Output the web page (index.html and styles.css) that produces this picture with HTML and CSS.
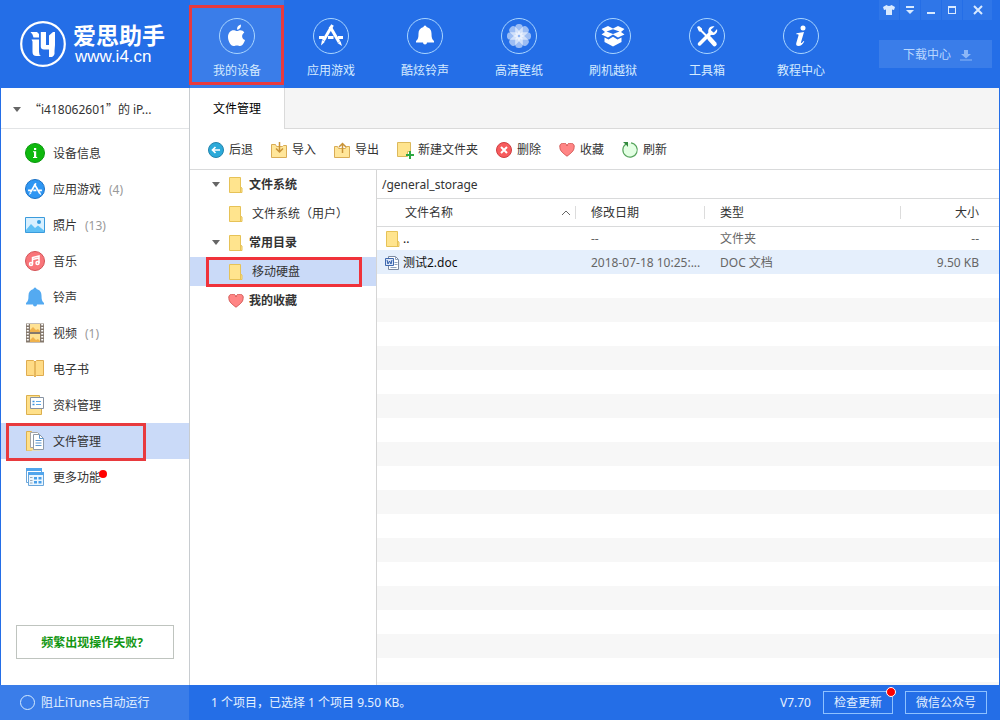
FILE: index.html
```html
<!DOCTYPE html>
<html lang="zh-CN">
<head>
<meta charset="utf-8">
<meta name="viewport" content="width=device-width, initial-scale=1">
<title>爱思助手</title>
<link rel="stylesheet" href="styles.css">
</head>
<body>
<svg class="sprite" aria-hidden="true">
  <symbol id="folder" viewBox="0 0 16 16">
    <path d="M1.500.5h11v9.500l1.500 1v4.500H1.500z" fill="#ffe48e" stroke="#e6c257"/>
    <path d="M12.500 10v5" stroke="#e6c257" fill="none"/>
  </symbol>
  <symbol id="heart" viewBox="0 0 18 16">
    <path d="M9 15C5 12 1 9 1 5.200A4 4 0 0 1 9 3.500A4 4 0 0 1 17 5.200C17 9 13 12 9 15z" fill="#ff8585" stroke="#cf5350"/>
  </symbol>
  <symbol id="appstore" viewBox="0 0 26 22">
    <g fill="none" stroke="currentColor" stroke-width="3">
      <path d="M1 13.500h5M10 13.500h5.500M20 13.500h5"/>
      <path d="M14.500 1L5.500 16.500"/>
      <path d="M12 2.500L21 18"/>
    </g>
    <path d="M4 16l3 1.800L3 21.500zM19.500 19l3-1.800 1.500 4.800z" fill="currentColor"/>
  </symbol>
  <symbol id="bell" viewBox="0 0 20 20">
    <path d="M8.500 2a1.500 1.500 0 0 1 3 0C15 2.800 16.500 5.500 16.500 8.500c0 4 .5 6 2.500 7.500v1.500h-7a2 2 0 0 1-4 0H1V16c2-1.500 2.500-3.500 2.500-7.500C3.500 5.500 5 2.800 8.500 2z" fill="currentColor"/>
  </symbol>
</svg>

<div class="window">
  <header class="header">
    <a class="logo" href="#">
      <svg class="logo-mark" viewBox="0 0 46 46" aria-hidden="true">
        <circle cx="23" cy="23" r="21.800" fill="none" stroke="#fff" stroke-width="2.200"/>
        <path d="M10.500 11h6.500l2 2v3.500h-5.500l-1-3zM11.500 18.500H19V31q0 3 2 4h-4.500q-4 0-4-4V20.500z" fill="#fff"/>
        <path d="M20.800 11H26v13h3V14.500l4-3.500h2v13l-.5 6V33q-.5 2-2.500 3h-3v-7.500h-5q-3.200 0-3.200-3z" fill="#fff"/>
      </svg>
      <span class="logo-text">
        <span class="logo-name">爱思助手</span>
        <span class="logo-url">www.i4.cn</span>
      </span>
    </a>
    <nav class="main-nav">
      <a class="nav-item nav-item-active" href="#">
        <svg class="nav-icon" viewBox="0 0 36 36" aria-hidden="true"><circle class="ring" cx="18" cy="18" r="17.500"/><path fill="#fff" d="M18 11.800q-.2-4.300 4-5.300 .2 4.500-4 5.300zM9 19c0-5.300 4.200-7.900 7.200-6.500 1.600.7 2.100.7 3.700 0 2-.8 4.200 0 5.400 1.900-3.300 2.100-2.600 6.500.7 7.700-1 3.100-2.800 6-4.800 6-1.300 0-1.700-.7-3.300-.7s-2 .7-3.300.7c-3 0-5.600-5.200-5.600-9.100z"/></svg>
        <span>我的设备</span>
      </a>
      <a class="nav-item" href="#">
        <svg class="nav-icon" viewBox="0 0 36 36" aria-hidden="true"><circle class="ring" cx="18" cy="18" r="17.500"/><use href="#appstore" x="5" y="6" width="26" height="22"/></svg>
        <span>应用游戏</span>
      </a>
      <a class="nav-item" href="#">
        <svg class="nav-icon" viewBox="0 0 36 36" aria-hidden="true"><circle class="ring" cx="18" cy="18" r="17.500"/><use href="#bell" x="8" y="7" width="20" height="20"/></svg>
        <span>酷炫铃声</span>
      </a>
      <a class="nav-item" href="#">
        <svg class="nav-icon" viewBox="0 0 36 36" aria-hidden="true"><circle class="ring" cx="18" cy="18" r="17.500"/>
          <g fill="#fff" fill-opacity=".55"><rect id="petal" x="14.200" y="6" width="7.600" height="11.500" rx="3.500"/><use href="#petal" transform="rotate(45 18 18)"/><use href="#petal" transform="rotate(90 18 18)"/><use href="#petal" transform="rotate(135 18 18)"/><use href="#petal" transform="rotate(180 18 18)"/><use href="#petal" transform="rotate(225 18 18)"/><use href="#petal" transform="rotate(270 18 18)"/><use href="#petal" transform="rotate(315 18 18)"/></g><circle cx="18" cy="18" r="1.200" fill="#8fb5f5"/></svg>
        <span>高清壁纸</span>
      </a>
      <a class="nav-item" href="#">
        <svg class="nav-icon" viewBox="0 0 36 36" aria-hidden="true"><circle class="ring" cx="18" cy="18" r="17.500"/><path fill="#fff" fill-rule="evenodd" d="M6.500 11L13 8l5 2.500L23 8l6.500 3-3.500 3 3.500 2.500L23 19.500l-5-3-5 3-6.500-3L10 14zM11.500 13.500l6.500 2.500 6.500-2.500L18 11.200zM9.500 19.500l4 2 4.500-2.800 4.500 2.800 4-2v4.500L18 28.500 9.500 24z"/></svg>
        <span>刷机越狱</span>
      </a>
      <a class="nav-item" href="#">
        <svg class="nav-icon" viewBox="0 0 36 36" aria-hidden="true"><circle class="ring" cx="18" cy="18" r="17.500"/><g stroke="#fff" fill="none"><path d="M9.500 10l10.500 10.500" stroke-width="2"/><path d="M20.500 20.500l5 5.500" stroke-width="4.500" stroke-linecap="round"/><path d="M10.500 26L22 14.500" stroke-width="3.500" stroke-linecap="round"/></g><path fill="#fff" d="M8 9l2-1 3 2.500v2l-1 1h-2zM25.500 8.500l-3.500 3 .5 2.500 2.500.5 3-3.500c1 3-1.500 6.500-5 6-3-.3-4.500-3-3.500-5.500.8-2.500 3.300-3.700 6-3z"/></svg>
        <span>工具箱</span>
      </a>
      <a class="nav-item" href="#">
        <svg class="nav-icon" viewBox="0 0 36 36" aria-hidden="true"><circle class="ring" cx="18" cy="18" r="17.500"/><circle cx="20" cy="10" r="2.500" fill="#fff"/><path fill="#fff" d="M13.500 15.200l7.500-1.200-3 10.200c-.4 1.400.8 1.200 2.500-1.200l.8.600c-1.800 3.300-3.600 4.400-5.800 4.400-2 0-2.700-1.200-2.200-3l2.200-7.600c.3-1-.3-1.200-2.200-1.200z"/></svg>
        <span>教程中心</span>
      </a>
    </nav>
    <div class="header-side">
      <div class="window-controls">
        <button type="button" aria-label="皮肤"><svg viewBox="0 0 12 10" width="12" height="10"><path d="M3.500 0Q6 2 8.500 0L12 2l-1 3-2-.5V10H3V4.500L1 5 0 2z" fill="currentColor"/></svg></button>
        <button type="button" aria-label="菜单"><svg viewBox="0 0 10 8" width="10" height="8"><path d="M1 0h8v2H1zM1 4h8L5 8z" fill="currentColor"/></svg></button>
        <button type="button" aria-label="最小化"><svg viewBox="0 0 10 10" width="10" height="10"><path d="M1 7h8v2H1z" fill="currentColor"/></svg></button>
        <button type="button" aria-label="最大化"><svg viewBox="0 0 10 10" width="10" height="10"><path d="M1 1h8v8H1zM2 3v5h6V3z" fill="currentColor" fill-rule="evenodd"/></svg></button>
        <button class="close" type="button" aria-label="关闭"><svg viewBox="0 0 10 10" width="10" height="10"><path d="M1 1l8 8M9 1L1 9" stroke="currentColor" stroke-width="2"/></svg></button>
      </div>
      <button class="download" type="button">下载中心
        <svg viewBox="0 0 12 12" width="12" height="12" aria-hidden="true"><path d="M4 1h4v4h3L6 9.500 1 5h3zM0 10.500h12v1H0z" fill="currentColor" fill-opacity=".65"/></svg>
      </button>
    </div>
  </header>

  <div class="body">
    <aside class="sidebar">
      <button class="device" type="button"><span class="caret"></span><span><span class="quote">“</span>i418062601<span class="quote">”</span>的 iP...</span></button>
      <nav class="side-nav">
        <a class="side-item" href="#"><svg class="side-icon" viewBox="0 0 20 20" aria-hidden="true"><circle cx="10" cy="10" r="9.500" fill="#0eb80e" stroke="#08990b"/><path fill="#fff" d="M9 5h2.200v2H9zM8 8.200h3.200V14h1v1H8v-1h1V9.200H8z"/></svg><span>设备信息</span></a>
        <a class="side-item" href="#"><svg class="side-icon" viewBox="0 0 20 20" aria-hidden="true"><circle cx="10" cy="10" r="9.500" fill="#2e96f3" stroke="#1b71c5"/><g color="#fff"><use href="#appstore" x="2.500" y="3.500" width="15" height="13"/></g></svg><span>应用游戏</span><span class="count">(4)</span></a>
        <a class="side-item" href="#"><svg class="side-icon" viewBox="0 0 20 20" aria-hidden="true"><path d="M.5 2.500h19v15H.5z" fill="#d8f0ff" stroke="#3b9bdc"/><path d="M1 15l5-6 4 4 3-2.500 6 5V17H1z" fill="#5fc0f5"/><circle cx="14" cy="7" r="2" fill="#379de0"/></svg><span>照片</span><span class="count">(13)</span></a>
        <a class="side-item" href="#"><svg class="side-icon" viewBox="0 0 20 20" aria-hidden="true"><circle cx="10" cy="10" r="9.500" fill="#f9757a" stroke="#d35356"/><g fill="none" stroke="#fff" stroke-width="1.500"><path d="M7.500 13V6.500l6.500-1.500v7M7.500 8.500L14 7"/><circle cx="6" cy="13" r="1.500"/><circle cx="12.500" cy="12" r="1.500"/></g></svg><span>音乐</span></a>
        <a class="side-item" href="#"><svg class="side-icon side-bell" viewBox="0 0 20 20" aria-hidden="true"><use href="#bell" width="20" height="20"/></svg><span>铃声</span></a>
        <a class="side-item" href="#"><svg class="side-icon" viewBox="0 0 20 20" aria-hidden="true"><path d="M1 .5h18v19H1z" fill="#85796d"/><path d="M5 1h10v8H5zM5 11h10v8H5z" fill="#ffe294"/><path d="M5 9V7l3-3 3 3 2-1 2 2v1zM5 19v-2l3-3 3 3 2-1 2 2v1z" fill="#f0b24c"/><path d="M2.800 1v18M17.200 1v18" stroke="#fff" stroke-width="2" stroke-dasharray="1.500 1.500"/></svg><span>视频</span><span class="count">(1)</span></a>
        <a class="side-item" href="#"><svg class="side-icon" viewBox="0 0 20 20" aria-hidden="true"><path d="M1.500 1.500h7L10 3l1.500-1.500h7v15h-7L10 18l-1.500-1.500h-7z" fill="#ffdb85" stroke="#dfac50"/><path d="M10 3v15" stroke="#dfac50" stroke-width="1.500"/></svg><span>电子书</span></a>
        <a class="side-item" href="#"><svg class="side-icon" viewBox="0 0 20 20" aria-hidden="true"><path d="M1.500.5h13v3h2v16h-15z" fill="#ffe08a" stroke="#dcb04e"/><path d="M5.500 2.500h13v11h-13z" fill="#fff" stroke="#8793a3"/><path d="M7.500 6.500h2M7.500 9.500h2" stroke="#3a91dd" stroke-width="1.500"/><path d="M11 6.500h5M11 9.500h5" stroke="#5ba8e8"/></svg><span>资料管理</span></a>
        <a class="side-item side-item-active" href="#"><svg class="side-icon" viewBox="0 0 20 20" aria-hidden="true"><path d="M1.500.5h5v19h-5z" fill="#ffe08a" stroke="#dcb04e"/><path d="M2 15h13v4.500H2z" fill="#ffe08a"/><path d="M5.500 1.500h7l2 2v13h-9z" fill="#fff" stroke="#a5a5a5"/><path d="M8.500 3.500h6l4 4v11h-10z" fill="#fff" stroke="#8f9aa8"/><path d="M14.500 4v3.500h4M10.500 9.500h6M10.500 12h6M10.500 14.500h6" fill="none" stroke="#5f98cf"/></svg><span>文件管理</span></a>
        <a class="side-item" href="#"><svg class="side-icon" viewBox="0 0 20 20" aria-hidden="true"><path d="M1.500 1.500h15v14h-15z" fill="#fff" stroke="#6aa6da"/><path d="M1 1h16v3H1z" fill="#51a5ec"/><path d="M3.500 5.500h15v13h-15z" fill="#eaf6ff" stroke="#6aa6da"/><path d="M3 5h16v3H3z" fill="#51a5ec"/><path d="M9 10h3v2.500H9zM13.500 10h3v2.500h-3zM9 14h3v2.500H9zM13.500 14h3v2.500h-3z" fill="#489ee8"/><path d="M5 10.500h2.500M5 13.500h2.500M5 16h2.500" stroke="#9aa9b5"/></svg><span class="with-dot">更多功能<i class="dot"></i></span></a>
      </nav>
      <button class="help" type="button">频繁出现操作失败?</button>
    </aside>

    <main class="main">
      <div class="tabs"><button class="tab" type="button">文件管理</button></div>
      <div class="toolbar">
        <button type="button"><svg viewBox="0 0 16 16" aria-hidden="true"><circle cx="8" cy="8" r="7.500" fill="#2caad9" stroke="#2384ad"/><path d="M12 8H5M7.500 5L4.500 8l3 3" fill="none" stroke="#fff" stroke-width="1.700"/></svg>后退</button>
        <button type="button"><svg viewBox="0 0 16 16" aria-hidden="true"><path d="M.5 2.500h4l1 2h6l1-1h3v12H.5z" fill="#ffe69a" stroke="#d9ac55"/><path d="M8.500 0v9.500M5 6.500L8.500 10 12 6.500" fill="none" stroke="#c99338" stroke-width="1.500"/></svg>导入</button>
        <button type="button"><svg viewBox="0 0 16 16" aria-hidden="true"><path d="M.5 4.500h3l1 2h7l1-2h3v11H.5z" fill="#ffe69a" stroke="#d9ac55"/><path d="M8.500 11V1.500M5 5l3.500-3.500L12 5" fill="none" stroke="#c99338" stroke-width="1.500"/></svg>导出</button>
        <button type="button"><svg viewBox="0 0 16 16" aria-hidden="true"><path d="M.5.5h13v9h-3v5H.5z" fill="#ffe48e" stroke="#dcb95c"/><path d="M13 9v8M9 13h8" stroke="#2da843" stroke-width="2"/></svg>新建文件夹</button>
        <button type="button"><svg viewBox="0 0 16 16" aria-hidden="true"><circle cx="8" cy="8" r="7.500" fill="#f75b5d" stroke="#cf3e41"/><path d="M5 5l6 6M11 5l-6 6" stroke="#fff" stroke-width="2"/></svg>删除</button>
        <button type="button"><svg viewBox="0 0 18 16" aria-hidden="true"><use href="#heart"/></svg>收藏</button>
        <button type="button"><svg viewBox="0 0 16 16" aria-hidden="true"><circle cx="8" cy="8" r="7" fill="#e3ffe3"/><path d="M4 2A7.200 7.200 0 1 0 9 .8" fill="none" stroke="#55a35b" stroke-width="1.200"/><path d="M1 0h5v5L4.300 3z" fill="#328a3e"/></svg>刷新</button>
      </div>
      <div class="files">
        <ul class="tree">
          <li><a class="tree-row tree-group" href="#"><span class="caret"></span><svg viewBox="0 0 16 16"><use href="#folder"/></svg>文件系统</a>
            <ul><li><a class="tree-row tree-leaf" href="#"><svg viewBox="0 0 16 16"><use href="#folder"/></svg>文件系统（用户）</a></li></ul></li>
          <li><a class="tree-row tree-group" href="#"><span class="caret"></span><svg viewBox="0 0 16 16"><use href="#folder"/></svg>常用目录</a>
            <ul><li><a class="tree-row tree-leaf tree-selected" href="#"><svg viewBox="0 0 16 16"><use href="#folder"/></svg>移动硬盘</a></li></ul></li>
          <li><a class="tree-row tree-group" href="#"><span class="caret caret-none"></span><svg viewBox="0 0 18 16"><use href="#heart"/></svg>我的收藏</a></li>
        </ul>
        <section class="listing">
          <div class="path">/general_storage</div>
          <table>
            <colgroup><col class="col-name"><col class="col-date"><col><col class="col-size"></colgroup>
            <thead><tr><th><span class="sortable">文件名称<svg viewBox="0 0 10 6" width="10" height="6" aria-hidden="true"><path d="M1 5l4-4 4 4" fill="none" stroke="#666"/></svg></span></th><th>修改日期</th><th>类型</th><th>大小</th></tr></thead>
            <tbody>
              <tr><td><span class="file"><svg viewBox="0 0 16 16"><use href="#folder"/></svg>..</span></td><td>--</td><td>文件夹</td><td>--</td></tr>
              <tr class="row-selected"><td><span class="file"><svg viewBox="0 0 16 16" aria-hidden="true"><path d="M3.500 1.500h7l3 3v10h-10z" fill="#fff" stroke="#7d8aa0"/><path d="M10.500 1.500v3h3M9.500 7.500h3M9.500 9.500h3M5.500 12.500h6" fill="none" stroke="#8fa2bd"/><path d="M.5 3.500h8v7h-8z" fill="#dbe6f8" stroke="#3f68ae"/><path d="M2 5l1 4 1.500-3L6 9l1-4" fill="none" stroke="#2f5ca8"/></svg>测试2.doc</span></td><td>2018-07-18 10:25:...</td><td>DOC 文档</td><td>9.50 KB</td></tr>
            </tbody>
          </table>
          <div class="stripes"></div>
        </section>
      </div>
    </main>
  </div>

  <footer class="footer">
    <label class="itunes"><input type="checkbox">阻止iTunes自动运行</label>
    <span class="status">1 个项目，已选择 1 个项目 9.50 KB。</span>
    <span class="version">V7.70</span>
    <button class="foot-btn" type="button">检查更新<i class="dot dot-ringed"></i></button>
    <button class="foot-btn" type="button">微信公众号</button>
  </footer>
</div>
</body>
</html>
```
FILE: styles.css
```css
* { box-sizing: border-box; }

body {
  margin: 0;
  font: 12px/18px "Noto Sans", "Noto Sans CJK SC", sans-serif;
  color: #333;
  background: #fff;
}

a { color: inherit; text-decoration: none; }
ul { list-style: none; margin: 0; padding: 0; }
svg { display: block; flex: none; overflow: visible; }

button {
  font: inherit;
  color: inherit;
  background: none;
  border: 0;
  border-radius: 0;
  padding: 0;
  margin: 0;
}

.sprite { position: absolute; width: 0; height: 0; }

.window { display: flex; flex-direction: column; min-height: 100vh; }

/* Header */
.header { display: flex; height: 88px; background: #246ee7; color: #fff; }

.logo { display: flex; align-items: center; gap: 7px; width: 190px; padding-left: 20px; flex: none; }
.logo-mark { width: 46px; height: 46px; }
.logo-text { display: flex; flex-direction: column; gap: 2px; }
.logo-name { font: 700 23px/24px "Noto Sans CJK SC", sans-serif; }
.logo-url { font: 17px/18px "Liberation Sans", sans-serif; padding-left: 2px; }

.main-nav { display: flex; }
.nav-item {
  display: flex;
  flex-direction: column;
  align-items: center;
  gap: 8px;
  width: 94px;
  padding-top: 18px;
  color: #d5ebff;
}
.nav-icon { width: 36px; height: 36px; color: #fff; }
.ring { fill: none; stroke: #a9d5ff; }
.nav-item-active { position: relative; background: #3a7de9; }
.nav-item-active::after {
  content: "";
  position: absolute;
  inset: 5px 0 3px -1px;
  border: 3px solid #e83a3e;
}

.header-side { margin-left: auto; margin-right: 8px; width: 113px; }
.window-controls { display: flex; gap: 1px; height: 20px; margin-bottom: 20px; color: #d9eaff; }
.window-controls button { display: flex; align-items: center; justify-content: center; width: 20px; background: #2f76e8; }
.window-controls .close { flex: 1; }
.download {
  display: flex;
  align-items: center;
  justify-content: center;
  gap: 9px;
  width: 100%;
  height: 28px;
  padding: 2px 0 0 4px;
  background: #3a7de9;
  color: #b9d7ff;
}

/* Body */
.body { display: flex; flex: 1; border: solid #246ee7; border-width: 0 1px; }

.sidebar { display: flex; flex-direction: column; width: 189px; border-right: 1px solid #c8ccd0; flex: none; }
.device {
  display: flex;
  align-items: center;
  gap: 8px;
  height: 41px;
  padding: 2px 0 0 12px;
  border-bottom: 1px solid #e2e4e6;
}
.quote { font-family: "Noto Sans CJK SC", sans-serif; }
.caret { width: 8px; border: 4px solid transparent; border-top: 5px solid #666; border-bottom: 0; }
.caret-none { border-color: transparent; }

.side-nav { padding-top: 6px; }
.side-item { display: flex; align-items: center; gap: 8px; height: 36px; padding-left: 24px; }
.side-item span { padding-top: 2px; }
.side-icon { width: 20px; height: 20px; }
.side-bell { color: #54aaf1; }
.count { color: #999; }
.side-item-active { position: relative; background: #cadaf8; }
.side-item-active::after {
  content: "";
  position: absolute;
  inset: 0 43px -2px 5px;
  border: 3px solid #e83a3e;
}
.with-dot { position: relative; }
.dot { position: absolute; top: 3px; right: -6px; width: 8px; height: 8px; border-radius: 50%; background: #f00; }

.help {
  height: 34px;
  margin: auto 15px 26px;
  padding: 2px 6px 0 0;
  border: 1px solid #bfc4bf;
  color: #119611;
  font-weight: 700;
}

/* File manager */
.main { display: flex; flex-direction: column; flex: 1; min-width: 0; }
.tabs { display: flex; height: 41px; background: linear-gradient(#dadada, #dadada) bottom / 100% 1px no-repeat #f5f5f5; }
.tab { width: 95px; background: #fff; border-right: 1px solid #dadada; color: #000; }

.toolbar { display: flex; gap: 18px; height: 41px; padding: 1px 0 0 18px; border-bottom: 1px solid #d9dadb; }
.toolbar button { display: flex; align-items: center; gap: 5px; }
.toolbar svg { width: 16px; height: 16px; }

.files { display: flex; flex: 1; }
.tree { width: 187px; border-right: 1px solid #d5d5d5; flex: none; }
.tree-row { display: flex; align-items: center; gap: 5px; height: 29px; }
.tree-row svg { width: 16px; height: 16px; }
.tree-group { padding-left: 22px; font-weight: 700; }
.tree-group .caret { margin-right: 3px; }
.tree-leaf { padding-left: 38px; gap: 8px; }
.tree-selected { position: relative; background: #cadaf8; }
.tree-selected::after {
  content: "";
  position: absolute;
  inset: 0 14px -1px 16px;
  border: 3px solid #f0323a;
}

.listing { display: flex; flex-direction: column; flex: 1; min-width: 0; }
.path { height: 29px; padding: 6px 5px 4px; border-bottom: 1px solid #d9dadb; }

table { width: 100%; table-layout: fixed; border-collapse: collapse; }
.col-name { width: 199px; }
.col-date { width: 129px; }
.col-size { width: 98px; }
th, td { padding: 2px 0 0 15px; text-align: left; white-space: nowrap; }
th { height: 27px; font-weight: 400; background: linear-gradient(#dcdcdc, #dcdcdc) right / 1px 13px no-repeat; }
th:last-child { background: none; }
thead tr { border-bottom: 1px solid #d9dadb; }
th:first-child { padding-left: 28px; }
.sortable { display: flex; align-items: center; justify-content: space-between; padding-right: 5px; }
td { height: 24px; color: #666; }
td:first-child { padding-left: 8px; color: #111; }
th:last-child, td:last-child { padding-left: 0; padding-right: 20px; text-align: right; }
.file { display: flex; align-items: center; gap: 2px; }
.file svg { width: 16px; height: 16px; }
.row-selected { background: #e5effc; }
.stripes { flex: 1; background: repeating-linear-gradient(#fff 0 24px, #f7f7f7 24px 48px); }

/* Footer */
.footer { display: flex; align-items: center; height: 35px; padding-right: 13px; background: #246ee7; color: #e4f1ff; }
.itunes {
  display: flex;
  align-items: center;
  gap: 6px;
  align-self: stretch;
  width: 189px;
  padding-left: 20px;
  background: #3a7de9;
}
.itunes input { appearance: none; width: 15px; height: 15px; margin: 0; border: 1px solid #d5ebff; border-radius: 50%; }
.status { margin: 0 auto 0 22px; }
.version { margin-right: 12px; }
.foot-btn { position: relative; height: 23px; padding: 0 10px; border: 1px solid #8ec1ff; }
.foot-btn + .foot-btn { margin-left: 12px; }
.dot-ringed { top: -5px; right: -4px; width: 10px; height: 10px; border: 1px solid #fff; }
```
